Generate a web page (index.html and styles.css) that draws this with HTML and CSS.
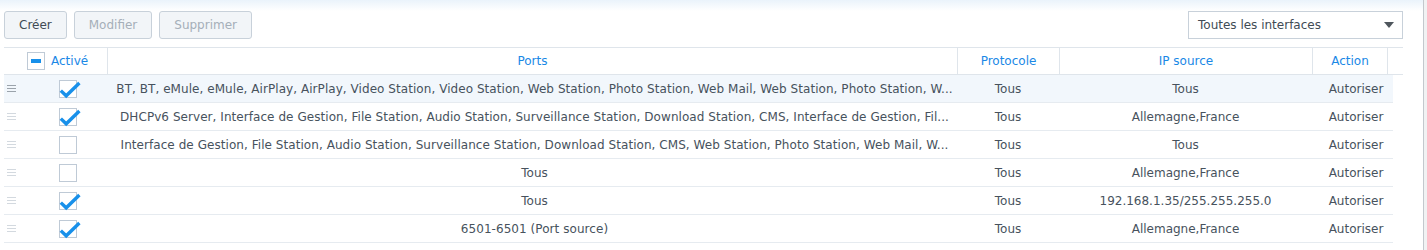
FILE: index.html
```html
<!DOCTYPE html>
<html>
<head>
    <link rel="stylesheet" href="styles.css">
</head>
<body>
    <div class="frame">
        <div class="toolbar">
            <div class="btns">
                <button class="btn">Créer</button>
                <button class="btn" disabled>Modifier</button>
                <button class="btn" disabled>Supprimer</button>
            </div>
            <div class="select">Toutes les interfaces<span class="caret"></span></div>
        </div>

        <div class="head">
            <div class="hcell first"><span class="box minus"><i></i></span>Activé</div>
            <div class="hcell">Ports</div>
            <div class="hcell">Protocole</div>
            <div class="hcell">IP source</div>
            <div class="hcell">Action</div>
            <div class="hcell last"></div>
        </div>

        <div class="row hover">
            <div class="cell first"><span class="handle"></span><span class="box checked"></span></div>
            <div class="cell ports">BT, BT, eMule, eMule, AirPlay, AirPlay, Video Station, Video Station, Web Station, Photo Station, Web Mail, Web Station, Photo Station, W...</div>
            <div class="cell">Tous</div>
            <div class="cell">Tous</div>
            <div class="cell action">Autoriser</div>
        </div>
        <div class="row">
            <div class="cell first"><span class="handle"></span><span class="box checked"></span></div>
            <div class="cell ports">DHCPv6 Server, Interface de Gestion, File Station, Audio Station, Surveillance Station, Download Station, CMS, Interface de Gestion, Fil...</div>
            <div class="cell">Tous</div>
            <div class="cell">Allemagne,France</div>
            <div class="cell action">Autoriser</div>
        </div>
        <div class="row">
            <div class="cell first"><span class="handle"></span><span class="box"></span></div>
            <div class="cell ports">Interface de Gestion, File Station, Audio Station, Surveillance Station, Download Station, CMS, Web Station, Photo Station, Web Mail, W...</div>
            <div class="cell">Tous</div>
            <div class="cell">Tous</div>
            <div class="cell action">Autoriser</div>
        </div>
        <div class="row">
            <div class="cell first"><span class="handle"></span><span class="box"></span></div>
            <div class="cell ports">Tous</div>
            <div class="cell">Tous</div>
            <div class="cell">Allemagne,France</div>
            <div class="cell action">Autoriser</div>
        </div>
        <div class="row">
            <div class="cell first"><span class="handle"></span><span class="box checked"></span></div>
            <div class="cell ports">Tous</div>
            <div class="cell">Tous</div>
            <div class="cell">192.168.1.35/255.255.255.0</div>
            <div class="cell action">Autoriser</div>
        </div>
        <div class="row">
            <div class="cell first"><span class="handle"></span><span class="box checked"></span></div>
            <div class="cell ports">6501-6501 (Port source)</div>
            <div class="cell">Tous</div>
            <div class="cell">Allemagne,France</div>
            <div class="cell action">Autoriser</div>
        </div>
    </div>
    <script>
        // coche bleue dans chaque case cochée
        document.querySelectorAll('.box.checked').forEach(function(b) {
            b.innerHTML = '<svg width="22" height="20" viewBox="0 0 22 20"><path d="M1.8 9.6 L7.2 14.8 L20.4 2" fill="none" stroke="#1890ea" stroke-width="3.4"/></svg>';
        });
    </script>
</body>
</html>
```

FILE: styles.css
```css
html, body {
    margin: 0;
    background: #f1f2f3;
}
.frame {
    width: 1424px;
    height: 250px;
    box-sizing: border-box;
    padding: 11px 20px 0 4px;
    background: linear-gradient(#eaf3fb 0, #ffffff 11px);
    border-right: 1px solid #c3c8cd;
    font-family: "DejaVu Sans", Verdana, sans-serif;
    font-size: 12px;
    color: #47525d;
}
.toolbar {
    display: flex;
    justify-content: space-between;
    height: 28px;
    margin-bottom: 8px;
}
.btns {
    display: flex;
    gap: 7px;
}
.btn {
    height: 28px;
    padding: 0 14px;
    border: 1px solid #c8d1da;
    border-radius: 3px;
    background: #f2f5f8;
    font-family: inherit;
    font-size: 12px;
    color: #414b55;
}
.btn[disabled] {
    color: #a5afb9;
}
.select {
    display: flex;
    align-items: center;
    justify-content: space-between;
    width: 215px;
    height: 28px;
    box-sizing: border-box;
    padding: 0 8px 0 9px;
    border: 1px solid #c8d1da;
    color: #414b55;
    background: #fff;
}
.caret {
    width: 0;
    height: 0;
    border-left: 5px solid transparent;
    border-right: 5px solid transparent;
    border-top: 6px solid #4f565d;
}
.head {
    display: grid;
    grid-template-columns: 103px 850px 102px 253px 75px 16px;
    height: 26px;
    border-top: 1px solid #dfe5eb;
    border-bottom: 1px solid #dfe5eb;
    color: #1a88e6;
}
.hcell {
    display: flex;
    align-items: center;
    justify-content: center;
    border-left: 1px solid #dfe5eb;
}
.hcell.first {
    justify-content: flex-start;
    padding-left: 23px;
    border-left: none;
    gap: 6px;
}
.row {
    display: grid;
    grid-template-columns: 103px 850px 102px 253px 81px;
    width: 1389px;
    height: 27px;
    border-bottom: 1px solid #e6ebf0;
}
.row.hover {
    background: #f2f7fc;
}
.cell {
    display: flex;
    align-items: center;
    justify-content: center;
    white-space: nowrap;
}
.cell.first {
    justify-content: flex-start;
    padding-left: 3px;
}
.cell.ports {
    padding: 0 5px 0 10px;
    overflow: hidden;
    letter-spacing: 0.055px;
}
.cell.action {
    padding-left: 7px;
}
.handle {
    width: 9px;
    height: 7px;
    margin-right: 43px;
    background: linear-gradient(#d3d9df 0 1px, transparent 1px 3px, #d3d9df 3px 4px, transparent 4px 6px, #d3d9df 6px 7px);
}
.row.hover .handle {
    background: linear-gradient(#9ba3ab 0 1px, transparent 1px 3px, #9ba3ab 3px 4px, transparent 4px 6px, #9ba3ab 6px 7px);
}
.box {
    position: relative;
    display: inline-block;
    width: 18px;
    height: 18px;
    box-sizing: border-box;
    border: 1px solid #bfcad6;
    background: #fff;
}
.box svg {
    position: absolute;
    left: -1px;
    top: 0;
}
.box.minus i {
    position: absolute;
    left: 3px;
    top: 6px;
    width: 10px;
    height: 4px;
    background: #1890ea;
}
```
